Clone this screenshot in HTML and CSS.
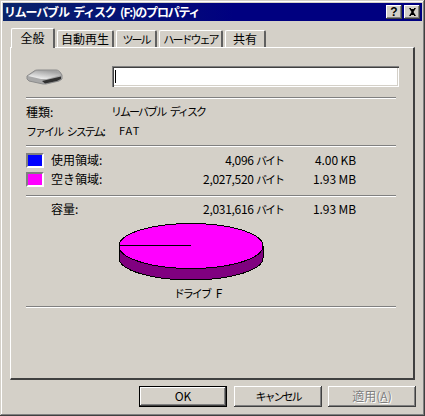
FILE: index.html
```html
<!DOCTYPE html>
<html lang="ja">
<head>
<meta charset="utf-8">
<title>プロパティ</title>
<link rel="stylesheet" href="styles.css">
</head>
<body>
<div class="window">
  <header class="titlebar">
    <span class="title">リムーバブル ディスク (F:)のプロパティ</span>
    <span class="caption-btn help">?</span>
    <span class="caption-btn close">
      <svg width="9" height="8" viewBox="0 0 9 8"><path d="M1 0h2v1h3V0h2L5.500 4 8 8H6V7H3v1H1l2.500-4z" fill="#000"/></svg>
    </span>
  </header>
  <nav class="tabs">
    <span class="tab active">全般</span>
    <span class="tab t2">自動再生</span>
    <span class="tab t3"><span class="kana">ツール</span></span>
    <span class="tab t4"><span class="kana">ハードウェア</span></span>
    <span class="tab t5">共有</span>
  </nav>
  <main class="panel">
    <div class="name-row">
      <svg class="drive" width="37" height="16" viewBox="0 0 37 16">
        <defs>
          <linearGradient id="driveTop" x1="0" y1="1" x2="0.6" y2="0">
            <stop offset="0" stop-color="#ffffff"/>
            <stop offset="1" stop-color="#a4a4a4"/>
          </linearGradient>
        </defs>
        <path d="M1 7 9 1.500C10 1 11 1 13 1H30C32 1 33 2 34 3L36 6V10L33 12 20 15H17L3 12 1 10z" fill="#a8a8a8" stroke="#8c8c8c"/>
        <path d="M2 7 10 2H31L35 6 21 10H15z" fill="url(#driveTop)"/>
        <path d="M16 12 35 7.500V10L31 12 19 14.500z" fill="#303030"/>
      </svg>
      <div class="name-input"><span class="caret"></span></div>
    </div>
    <hr class="sep first">
    <div class="info"><span class="info-label">種類:</span><span class="kana">リムーバブル ディスク</span></div>
    <div class="info"><span class="info-label"><span class="kana">ファイル システム</span>:</span><span class="fat">FAT</span></div>
    <hr class="sep second">
    <div class="usage top">
      <span class="swatch used"></span><span class="u-label">使用領域:</span><span class="u-bytes">4,096 <span class="kana tight">バイト</span></span><span class="u-size">4.00 KB</span>
    </div>
    <div class="usage">
      <span class="swatch free"></span><span class="u-label">空き領域:</span><span class="u-bytes">2,027,520 <span class="kana tight">バイト</span></span><span class="u-size">1.93 MB</span>
    </div>
    <hr class="sep third">
    <div class="usage cap">
      <span class="swatch none"></span><span class="u-label">容量:</span><span class="u-bytes">2,031,616 <span class="kana tight">バイト</span></span><span class="u-size">1.93 MB</span>
    </div>
    <svg class="pie" width="146" height="60" viewBox="0 0 146 60" shape-rendering="crispEdges">
      <path d="M1 23V35C1 47 33 57 73 57S145 47 145 35V23Z" fill="#800080" stroke="#000"/>
      <ellipse cx="73" cy="23" rx="72" ry="22.500" fill="#ff00ff" stroke="#000"/>
      <path d="M1 22.500H73" stroke="#000" fill="none"/>
    </svg>
    <div class="drive-label"><span class="kana">ドライブ</span> F</div>
    <hr class="sep last">
  </main>
  <footer class="buttons">
    <span class="btn default">OK</span>
    <span class="btn"><span class="kana">キャンセル</span></span>
    <span class="btn disabled">適用(<u>A</u>)</span>
  </footer>
</div>
</body>
</html>
```
FILE: styles.css
```css
* { box-sizing: border-box; }
html, body { margin: 0; padding: 0; }
body {
  width: 425px;
  height: 416px;
  overflow: hidden;
  background: #d4d0c8;
  font-family: "Noto Sans CJK JP", "Liberation Sans", sans-serif;
  font-size: 12px;
  color: #000;
}
.window {
  width: 425px;
  height: 416px;
  padding: 3px 3px 0;
  background: #d4d0c8;
  box-shadow: inset -1px -1px 0 #404040, inset 1px 1px 0 #d4d0c8, inset -2px -2px 0 #808080, inset 2px 2px 0 #fff;
}
.titlebar {
  height: 18px;
  display: flex;
  align-items: center;
  padding: 0 2px 0 1px;
  background: linear-gradient(90deg, #0a246a 0%, #000080 55%, #000080 100%);
}
.title {
  flex: 1;
  color: #fff;
  font-weight: 700;
  font-size: 12px;
  line-height: 18px;
  white-space: nowrap;
  letter-spacing: -1.2px;
  word-spacing: 3px;
}
.caption-btn {
  width: 16px;
  height: 14px;
  display: flex;
  align-items: center;
  justify-content: center;
  background: #d4d0c8;
  box-shadow: inset -1px -1px 0 #404040, inset 1px 1px 0 #fff, inset -2px -2px 0 #808080;
}
.help {
  margin-right: 2px;
  font-family: "Liberation Sans", sans-serif;
  font-weight: 700;
  font-size: 12px;
  line-height: 14px;
}
.tabs {
  display: flex;
  align-items: flex-end;
  height: 26px;
  padding-left: 9px;
  margin-left: -1px;
}
.tab {
  position: relative;
  height: 17px;
  margin-right: 2px;
  padding-bottom: 1px;
  display: flex;
  align-items: center;
  justify-content: center;
  border-top: 1px solid #fff;
  border-left: 1px solid #fff;
  border-right: 2px solid #606060;
  border-top-left-radius: 2px;
  border-top-right-radius: 2px;
  white-space: nowrap;
}
.tab.active {
  width: 44px;
  height: 20px;
  margin-bottom: -1px;
  padding-bottom: 2px;
  background: #d4d0c8;
  z-index: 1;
}
.t2 { width: 57px; }
.t3 { width: 41px; }
.t4 { width: 64px; }
.t5 { width: 41px; }
.kana {
  font-size: 11px;
  letter-spacing: -1.95px;
  word-spacing: 4px;
}
.kana.tight { letter-spacing: -2px; }
.panel {
  width: 405px;
  height: 333px;
  margin-left: 7px;
  padding: 18px 17px 0 15px;
  border-top: 1px solid #fff;
  border-left: 1px solid #fff;
  border-right: 2px solid #404040;
  border-bottom: 2px solid #404040;
}
.name-row {
  display: flex;
  align-items: center;
  height: 21px;
}
.drive { flex: none; margin-top: 1px; }
.name-input {
  flex: none;
  margin-left: 49px;
  width: 287px;
  height: 21px;
  background: #fff;
  padding: 4px 0 0 3px;
  box-shadow: inset 1px 1px 0 #808080, inset 2px 2px 0 #404040, inset -1px -1px 0 #fff, inset -2px -2px 0 #d4d0c8;
}
.caret {
  display: block;
  width: 1px;
  height: 13px;
  background: #000;
}
.sep {
  margin: 0;
  border: 0;
  width: 370px;
  height: 2px;
  border-top: 1px solid #808080;
  border-bottom: 1px solid #fff;
}
.sep.first { margin-top: 10px; }
.sep.second { margin-top: 4px; }
.sep.third { margin-top: 6px; }
.sep.last { margin-top: 1px; }
.info {
  display: flex;
  height: 19px;
  padding-bottom: 3px;
  align-items: center;
  white-space: nowrap;
}
.sep.first + .info { margin-top: 4px; }
.info-label { flex: none; width: 85px; }
.fat { margin-left: 8px; letter-spacing: 1px; font-size: 11px; }
.usage {
  display: flex;
  align-items: center;
  height: 19px;
  padding-bottom: 3px;
  white-space: nowrap;
}
.usage.top { margin-top: 4px; }
.usage.cap { margin-top: 3px; }
.swatch {
  flex: none;
  width: 18px;
  height: 15px;
  margin-top: 3px;
  border: 2px solid;
  border-color: #808080 #fff #fff #808080;
}
.used { background: #0000ff; }
.free { background: #ff00ff; }
.swatch.none { border: 0; background: none; }
.u-label { flex: none; width: 60px; margin-left: 7px; }
.u-bytes { flex: none; width: 172px; text-align: right; letter-spacing: -0.3px; }
.u-size { flex: none; width: 73px; text-align: right; letter-spacing: -0.1px; }
.pie {
  display: block;
  margin: 4px 0 0 92px;
}
.drive-label {
  height: 22px;
  line-height: 20px;
  width: 344px;
  text-align: center;
}
.drive-label .kana { margin-right: 3px; }
.buttons {
  display: flex;
  justify-content: flex-end;
  gap: 6px;
  padding: 6px 6px 0 0;
}
.btn {
  width: 88px;
  height: 21px;
  padding-bottom: 2px;
  display: flex;
  align-items: center;
  justify-content: center;
  background: #d4d0c8;
  box-shadow: inset -1px -1px 0 #404040, inset 1px 1px 0 #fff, inset -2px -2px 0 #808080;
}
.btn.default {
  margin-right: 1px;
  border: 1px solid #000;
}
.btn.disabled {
  color: #808080;
  text-shadow: 1px 1px 0 #fff;
}
```
